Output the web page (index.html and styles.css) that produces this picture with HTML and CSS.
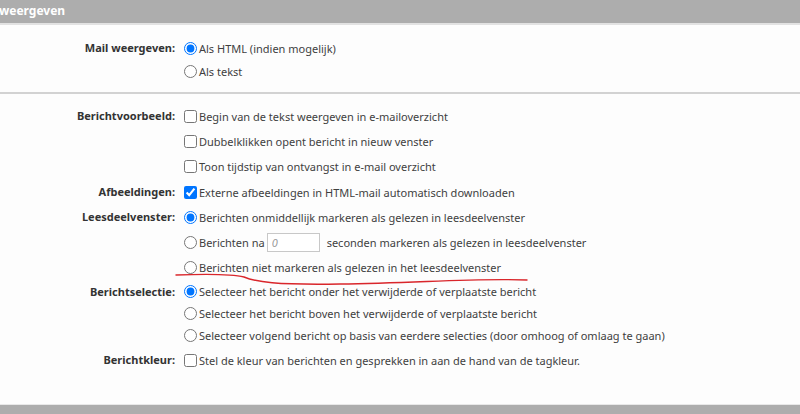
FILE: index.html
```html
<!DOCTYPE html>
<html lang="nl">
<head>
  <meta charset="UTF-8">
  <meta name="viewport" content="width=device-width, initial-scale=1.0">
  <title>Instellingen - Mail weergeven</title>
  <link rel="stylesheet" href="styles.css">
</head>
<body>
  <div class="section-bar">weergeven</div>

  <div class="settings">
    <!-- Mail weergeven -->
    <div class="group group-first">
      <div class="label">Mail weergeven:</div>
      <div class="options">
        <label class="option"><input type="radio" name="mail" checked>Als HTML (indien mogelijk)</label>
        <label class="option"><input type="radio" name="mail">Als tekst</label>
      </div>
    </div>

    <hr class="divider">

    <!-- Berichtvoorbeeld -->
    <div class="group">
      <div class="label">Berichtvoorbeeld:</div>
      <div class="options">
        <label class="option"><input type="checkbox">Begin van de tekst weergeven in e-mailoverzicht</label>
        <label class="option"><input type="checkbox">Dubbelklikken opent bericht in nieuw venster</label>
        <label class="option"><input type="checkbox">Toon tijdstip van ontvangst in e-mail overzicht</label>
      </div>
    </div>

    <!-- Afbeeldingen -->
    <div class="group group-images">
      <div class="label">Afbeeldingen:</div>
      <div class="options">
        <label class="option"><input type="checkbox" checked>Externe afbeeldingen in HTML-mail automatisch downloaden</label>
      </div>
    </div>

    <!-- Leesdeelvenster -->
    <div class="group">
      <div class="label">Leesdeelvenster:</div>
      <div class="options">
        <label class="option"><input type="radio" name="lees" checked>Berichten onmiddellijk markeren als gelezen in leesdeelvenster</label>
        <label class="option"><input type="radio" name="lees">Berichten na<input type="text" class="seconds" placeholder="0">seconden markeren als gelezen in leesdeelvenster</label>
        <label class="option"><input type="radio" name="lees">Berichten niet markeren als gelezen in het leesdeelvenster</label>
      </div>
    </div>

    <!-- Berichtselectie -->
    <div class="group group-tight">
      <div class="label">Berichtselectie:</div>
      <div class="options">
        <label class="option"><input type="radio" name="sel" checked>Selecteer het bericht onder het verwijderde of verplaatste bericht</label>
        <label class="option"><input type="radio" name="sel">Selecteer het bericht boven het verwijderde of verplaatste bericht</label>
        <label class="option"><input type="radio" name="sel">Selecteer volgend bericht op basis van eerdere selecties (door omhoog of omlaag te gaan)</label>
      </div>
    </div>

    <!-- Berichtkleur -->
    <div class="group">
      <div class="label">Berichtkleur:</div>
      <div class="options">
        <label class="option"><input type="checkbox">Stel de kleur van berichten en gesprekken in aan de hand van de tagkleur.</label>
      </div>
    </div>

    <!-- hand drawn red mark -->
    <svg class="scribble" width="800" height="40" viewBox="0 0 800 40">
      <path d="M176 8 C 205 7, 232 7, 244 10 C 256 15, 275 18, 340 17 C 420 16, 470 11, 527 13" fill="none" stroke="#d9262b" stroke-width="1.4" stroke-linecap="round"/>
    </svg>
  </div>

  <div class="section-bar section-bar-bottom"></div>
</body>
</html>
```

FILE: styles.css
```css
body {
  margin: 0;
  padding: 0;
  background: #fdfdfd;
  font-family: "Noto Sans", "Open Sans", sans-serif;
  font-size: 11px;
  color: #3f3f3f;
  height: 414px;
  overflow: hidden;
}

.section-bar {
  height: 23px;
  line-height: 22px;
  background: #adadad;
  border-bottom: 2px solid #e2e2e2;
  color: #fff;
  font-weight: bold;
  font-size: 12px;
  text-indent: -1px;
}

.section-bar-bottom {
  height: 10px;
  border-bottom: none;
  border-top: 1px solid #e8e8e8;
}

.settings {
  position: relative;
  padding-top: 12px;
  height: 367px;
}

.group {
  display: flex;
}

.group-first .option {
  height: 23px;
}

.group-images {
  margin-top: 1px;
}

.group-tight {
  margin-top: 0;
  margin-bottom: 2px;
}

.group-tight .option {
  height: 22px;
}

.label {
  width: 184px;
  padding-right: 9px;
  box-sizing: border-box;
  text-align: right;
  font-weight: bold;
  color: #333;
  height: 25px;
  line-height: 23px;
}

.group-first .label {
  line-height: 22px;
}

.options {
  display: flex;
  flex-direction: column;
}

.option {
  display: flex;
  align-items: center;
  height: 25px;
  white-space: nowrap;
}

.option input[type="radio"],
.option input[type="checkbox"] {
  width: 13px;
  height: 13px;
  margin: 0 2px 0 0;
}

.seconds {
  width: 53px;
  height: 19px;
  box-sizing: border-box;
  border: 1px solid #c8c8c8;
  padding: 0 4px;
  margin: 0 7px 0 2px;
  font-family: inherit;
  font-size: 11px;
}

.seconds::placeholder {
  color: #999;
  font-style: italic;
}

.divider {
  border: none;
  border-top: 2px solid #d2d2d2;
  margin: 9px 0 10px;
}

.scribble {
  position: absolute;
  left: 0;
  top: 242px;
}
```
